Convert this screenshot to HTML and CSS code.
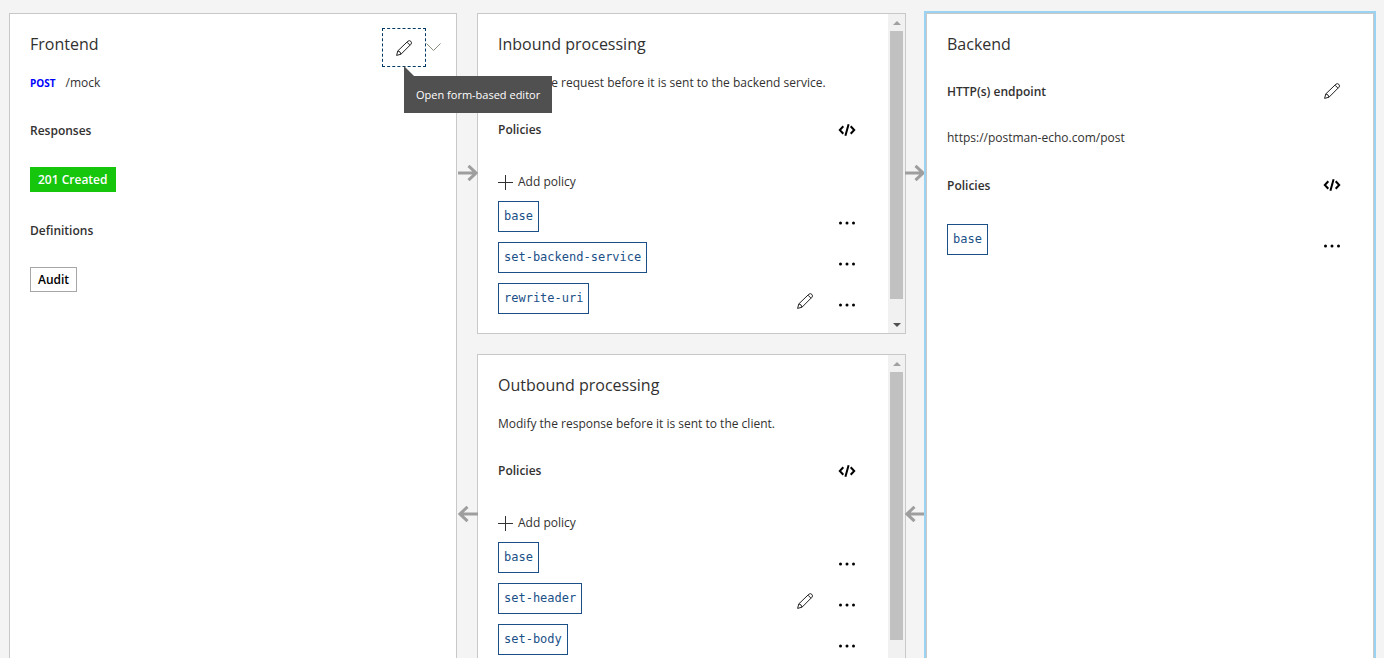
FILE: index.html
```html
<!DOCTYPE html>
<html lang="en">
<head>
<meta charset="utf-8">
<title>API design</title>
<link rel="stylesheet" href="styles.css">
</head>
<body>
<svg class="sprite" aria-hidden="true">
  <symbol id="pencil" viewBox="0 0 16 16"><path d="M.6 15.4 1.8 10.9 11.9 1.2Q13.4 0 14.9 1.4Q16.2 2.9 14.9 4.3L5 14.2ZM1.8 10.9Q4.5 11.2 5 14.2M11 2.2 14 5.2"/></symbol>
  <symbol id="code" viewBox="0 0 18 12"><path d="M5.3 2.2 1.8 6 5.3 9.8M12.7 2.2 16.2 6 12.7 9.8M10.6.3 7.4 11.7"/></symbol>
  <symbol id="dots" viewBox="0 0 18 4"><circle cx="2.5" cy="2" r="1.5"/><circle cx="9" cy="2" r="1.5"/><circle cx="15.5" cy="2" r="1.5"/></symbol>
  <symbol id="plus" viewBox="0 0 15 15"><path d="M7.5 0V15M0 7.5H15"/></symbol>
  <symbol id="arrow" viewBox="0 0 20 16"><path d="M0 8H18M10.5.8 18 8 10.5 15.2"/></symbol>
</svg>
<main class="board">
  <section class="card frontend">
    <header class="card-head">
      <h2>Frontend</h2>
      <div class="head-actions">
        <button class="edit-btn" aria-label="Open form-based editor" aria-describedby="tip"><svg class="pencil"><use href="#pencil"/></svg></button>
        <span class="tooltip" id="tip" role="tooltip">Open form-based editor</span>
        <button class="chevron-btn" aria-label="More editors"><svg viewBox="0 0 15 9"><path d="M.5.5 7.5 7.5 14.5.5"/></svg></button>
      </div>
    </header>
    <p class="operation"><span class="method">POST</span><span>/mock</span></p>
    <h3>Responses</h3>
    <button class="chip chip-success">201 Created</button>
    <h3>Definitions</h3>
    <button class="chip">Audit</button>
  </section>

  <div class="processing">
    <section class="card scroll-card">
      <svg class="arrow arrow-before"><use href="#arrow"/></svg>
      <svg class="arrow arrow-after"><use href="#arrow"/></svg>
      <div class="scroll-body">
        <h2>Inbound processing</h2>
        <p class="description">Modify the request before it is sent to the backend service.</p>
        <div class="row"><h3>Policies</h3><button class="icon-btn" aria-label="Policy code editor"><svg class="code"><use href="#code"/></svg></button></div>
        <button class="add-btn"><svg><use href="#plus"/></svg>Add policy</button>
        <ul class="policies">
          <li><button class="policy">base</button><button class="icon-btn" aria-label="More"><svg class="dots"><use href="#dots"/></svg></button></li>
          <li><button class="policy">set-backend-service</button><button class="icon-btn" aria-label="More"><svg class="dots"><use href="#dots"/></svg></button></li>
          <li><button class="policy">rewrite-uri</button><button class="icon-btn push" aria-label="Edit"><svg class="pencil"><use href="#pencil"/></svg></button><button class="icon-btn" aria-label="More"><svg class="dots"><use href="#dots"/></svg></button></li>
        </ul>
      </div>
      <div class="scrollbar"><span class="scroll-arrow up"></span><div class="track"><div class="thumb"></div></div><span class="scroll-arrow down"></span></div>
    </section>

    <section class="card scroll-card">
      <svg class="arrow arrow-before back"><use href="#arrow"/></svg>
      <svg class="arrow arrow-after back"><use href="#arrow"/></svg>
      <div class="scroll-body">
        <h2>Outbound processing</h2>
        <p class="description">Modify the response before it is sent to the client.</p>
        <div class="row"><h3>Policies</h3><button class="icon-btn" aria-label="Policy code editor"><svg class="code"><use href="#code"/></svg></button></div>
        <button class="add-btn"><svg><use href="#plus"/></svg>Add policy</button>
        <ul class="policies">
          <li><button class="policy">base</button><button class="icon-btn" aria-label="More"><svg class="dots"><use href="#dots"/></svg></button></li>
          <li><button class="policy">set-header</button><button class="icon-btn push" aria-label="Edit"><svg class="pencil"><use href="#pencil"/></svg></button><button class="icon-btn" aria-label="More"><svg class="dots"><use href="#dots"/></svg></button></li>
          <li><button class="policy">set-body</button><button class="icon-btn" aria-label="More"><svg class="dots"><use href="#dots"/></svg></button></li>
        </ul>
      </div>
      <div class="scrollbar"><span class="scroll-arrow up"></span><div class="track"><div class="thumb"></div></div><span class="scroll-arrow down"></span></div>
    </section>
  </div>

  <section class="card backend">
    <h2>Backend</h2>
    <div class="row"><h3>HTTP(s) endpoint</h3><button class="icon-btn" aria-label="Edit endpoint"><svg class="pencil"><use href="#pencil"/></svg></button></div>
    <p class="endpoint">https://postman-echo.com/post</p>
    <div class="row"><h3>Policies</h3><button class="icon-btn" aria-label="Policy code editor"><svg class="code"><use href="#code"/></svg></button></div>
    <ul class="policies">
      <li><button class="policy">base</button><button class="icon-btn" aria-label="More"><svg class="dots"><use href="#dots"/></svg></button></li>
    </ul>
  </section>
</main>
</body>
</html>
```
FILE: styles.css
```css
* { box-sizing: border-box; }
body {
  margin: 0;
  height: 100vh;
  overflow: hidden;
  background: #f4f4f4;
  color: #323130;
  font: 12px/18px "Open Sans", "Noto Sans", sans-serif;
}
h2, h3, p, ul { margin: 0; padding: 0; }
h2 { font-size: 16px; line-height: 20px; font-weight: 400; }
h3 { font-size: 12px; line-height: 18px; font-weight: 600; }
button {
  padding: 0;
  border: 0;
  background: none;
  color: inherit;
  font: inherit;
  cursor: pointer;
}
svg { display: block; flex: none; }
.sprite { position: absolute; width: 0; height: 0; }

.board {
  display: grid;
  grid-template-columns: 448fr 429fr 448fr;
  gap: 20px;
  padding: 13px 10px 0 9px;
  min-height: 100vh;
}
.card { background: #fff; border: 1px solid #c8c8c8; padding: 20px; }
.frontend, .backend { border-bottom: 0; }
.backend { position: relative; box-shadow: 0 0 0 2px #9bd3f2; }

.card-head { display: flex; justify-content: space-between; height: 20px; }
.head-actions { position: relative; z-index: 2; display: flex; align-items: center; height: 39px; margin: -6px -5px 0 0; }
.edit-btn {
  display: grid;
  place-items: center;
  width: 44px;
  height: 39px;
  border: 1px dashed #003966;
}
.chevron-btn svg { width: 15px; height: 9px; fill: none; stroke: #8a8a78; }
.tooltip {
  position: absolute;
  top: 48px;
  left: 22px;
  padding: 10px 12px 9px;
  background: #505050;
  color: #fff;
  font-size: 11px;
  white-space: nowrap;
}
.tooltip::before {
  content: "";
  position: absolute;
  left: 0;
  bottom: 100%;
  border-left: 10px solid #505050;
  border-top: 10px solid transparent;
}
.operation { display: flex; gap: 10px; margin: 20px 0 30px; }
.method { color: #00f; font-size: 10px; font-weight: 700; }
.chip {
  display: block;
  height: 25px;
  margin: 27px 0 30px;
  padding: 0 7px;
  border: 1px solid #a6a6a6;
  color: #000;
  font-weight: 600;
}
.chip-success { background: #16c60c; border-color: #16c60c; color: #fff; }

.pencil { width: 16px; height: 16px; fill: none; stroke: #222; }
.code { width: 18px; height: 12px; fill: none; stroke: #000; stroke-width: 2; }
.dots { width: 18px; height: 4px; fill: #000; }
.icon-btn { display: grid; place-items: center; width: 42px; height: 18px; }

.processing { display: flex; flex-direction: column; gap: 20px; min-width: 0; }
.scroll-card { position: relative; display: flex; flex: none; padding: 0; }
.scroll-body { flex: 1; min-width: 0; padding: 20px 20px 19px; }
.description { margin: 20px 0 29px; white-space: nowrap; }
.row { display: flex; justify-content: space-between; align-items: center; }
.add-btn { display: flex; align-items: center; gap: 5px; margin: 34px 0 10px; line-height: 18px; }
.add-btn svg { width: 15px; height: 15px; stroke: #323130; }
.policies { display: grid; gap: 10px; list-style: none; }
.policies li { display: flex; align-items: center; justify-content: space-between; }
.policies .icon-btn { height: 31px; padding-top: 12px; }
.policies .push { margin-left: auto; padding-top: 5px; }
.policy {
  height: 31px;
  padding: 0 5px 2px;
  border: 1px solid #1b5087;
  background: #fff;
  color: #1b5087;
  font: 12px/18px "DejaVu Sans Mono", monospace;
}
.arrow {
  position: absolute;
  top: 151px;
  width: 20px;
  height: 16px;
  fill: none;
  stroke: #9e9e9e;
  stroke-width: 3;
}
.arrow-before { right: 100%; }
.arrow-after { left: 100%; }
.back { transform: scaleX(-1); }

.scrollbar { display: flex; flex-direction: column; width: 17px; background: #f1f1f1; }
.scroll-arrow { display: grid; place-items: center; height: 17px; }
.scroll-arrow::before { content: ""; border: 4px solid transparent; }
.up::before { border-top: 0; border-bottom-color: #a0a0a0; }
.down::before { border-bottom: 0; border-top-color: #505050; }
.track { flex: 1; padding: 0 2px; }
.thumb { height: 94%; background: #c1c1c1; }

.backend .row { align-items: flex-start; margin: 28px 0; }
.backend h3 { margin-top: 1px; }
.backend .row:has(+ .policies) { margin: 29px 0; }
```
